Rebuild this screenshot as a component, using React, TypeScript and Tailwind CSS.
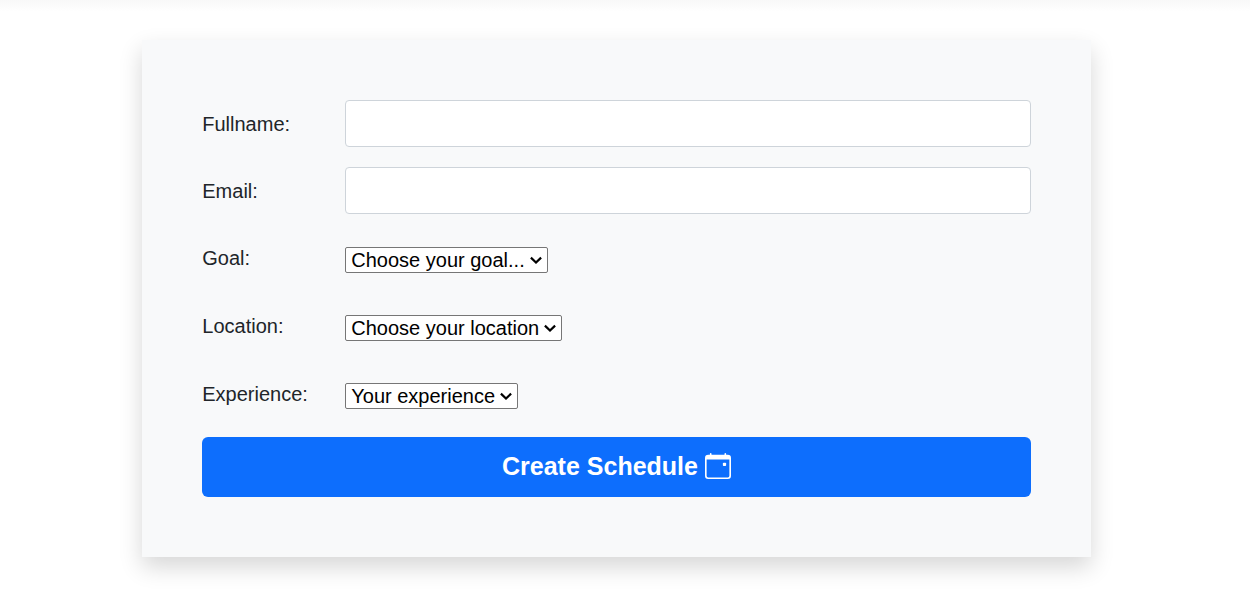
import { BsCalendarEvent } from "react-icons/bs";

type Choice = { id: string; label: string; options: string[] };

const choices: Choice[] = [
  { id: "goal", label: "Goal:", options: ["Choose your goal..."] },
  { id: "location", label: "Location:", options: ["Choose your location"] },
  { id: "experience", label: "Experience:", options: ["Your experience"] },
];

const texts = [
  { id: "fullname", label: "Fullname:", type: "text" },
  { id: "email", label: "Email:", type: "email" },
];

function Arrow() {
  return (
    <svg
      viewBox="0 0 12 8"
      className="pointer-events-none absolute top-1/2 right-[6px] h-2 w-3 -translate-y-1/2"
      fill="none"
      stroke="black"
      strokeWidth="2.2"
      aria-hidden="true"
    >
      <path d="M0.9 1.6 6 6.5 11.1 1.6" />
    </svg>
  );
}

export default function App() {
  return (
    <div className="min-h-screen bg-white pr-[17px] pb-10 font-['Liberation_Sans',Arial,sans-serif] text-xl text-[#212529]">
      <div className="-mr-[17px] h-3 bg-linear-to-b from-[#f8f8f8] to-white" />
      <main className="mx-auto mt-7 w-10/13 bg-[#f8f9fa] p-15 shadow-[0_10px_22px_rgba(0,0,0,0.16)]">
        <form>
          <div className="grid gap-5">
            {texts.map((t) => (
              <div key={t.id} className="grid grid-cols-[143px_1fr] items-center">
                <label htmlFor={t.id}>{t.label}</label>
                <input
                  id={t.id}
                  type={t.type}
                  className="h-[47px] rounded border border-[#ced4da] bg-white px-3"
                />
              </div>
            ))}
            {choices.map((c) => (
              <div key={c.id} className="grid h-12 grid-cols-[143px_1fr] items-center">
                <label htmlFor={c.id}>{c.label}</label>
                <div className="relative mt-1 justify-self-start">
                  <select
                    id={c.id}
                    className="block h-[26px] appearance-none rounded-xs border border-[#767676] bg-white pr-[22px] pl-[5px] leading-6 text-black"
                  >
                    {c.options.map((o) => (
                      <option key={o}>{o}</option>
                    ))}
                  </select>
                  <Arrow />
                </div>
              </div>
            ))}
          </div>
          <button
            type="submit"
            className="mt-[19px] flex h-15 w-full items-center justify-center gap-[7px] rounded-md bg-[#0d6efd] pb-[2px] text-[25px] font-bold text-white"
          >
            Create Schedule <BsCalendarEvent className="size-[26px]" />
          </button>
        </form>
      </main>
    </div>
  );
}
